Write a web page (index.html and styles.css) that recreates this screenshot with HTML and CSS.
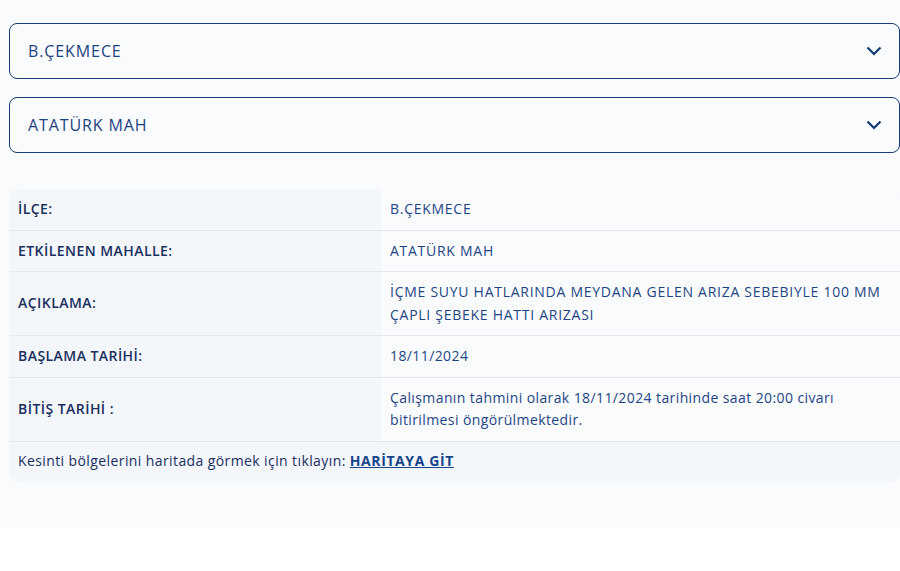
FILE: index.html
```html
<!DOCTYPE html>
<html lang="tr">
<head>
    <meta charset="UTF-8">
    <title>Arıza Kesinti Bilgisi</title>
    <link rel="stylesheet" href="styles.css">
</head>
<body>
    <div class="page">
        <div class="select-box">
            <span>B.ÇEKMECE</span>
            <svg class="chevron" width="16" height="10" viewBox="0 0 16 10"><path d="M1.5 1.5 L8 8 L14.5 1.5" fill="none" stroke="#123a72" stroke-width="2.2"/></svg>
        </div>
        <div class="select-box">
            <span>ATATÜRK MAH</span>
            <svg class="chevron" width="16" height="10" viewBox="0 0 16 10"><path d="M1.5 1.5 L8 8 L14.5 1.5" fill="none" stroke="#123a72" stroke-width="2.2"/></svg>
        </div>

        <div class="info">
            <div class="row">
                <div class="label">İLÇE:</div>
                <div class="value upper">B.ÇEKMECE</div>
            </div>
            <div class="row">
                <div class="label">ETKİLENEN MAHALLE:</div>
                <div class="value upper">ATATÜRK MAH</div>
            </div>
            <div class="row">
                <div class="label">AÇIKLAMA:</div>
                <div class="value upper">İÇME SUYU HATLARINDA MEYDANA GELEN ARIZA SEBEBIYLE 100 MM ÇAPLI ŞEBEKE HATTI ARIZASI</div>
            </div>
            <div class="row">
                <div class="label">BAŞLAMA TARİHİ:</div>
                <div class="value">18/11/2024</div>
            </div>
            <div class="row">
                <div class="label">BİTİŞ TARİHİ :</div>
                <div class="value">Çalışmanın tahmini olarak 18/11/2024 tarihinde saat 20:00 civarı bitirilmesi öngörülmektedir.</div>
            </div>
            <div class="foot">
                Kesinti bölgelerini haritada görmek için tıklayın: <a href="javascript:">HARİTAYA GİT</a>
            </div>
        </div>
    </div>
</body>
</html>
```

FILE: styles.css
```css
body { margin: 0; padding: 0; background: #fff; font-family: "Open Sans", "Noto Sans", sans-serif; color: #1b3566;}
a { color: #15448a; font-weight: 700; text-decoration: underline; letter-spacing: 0.6px;}
.page {
    width: 891px;
    padding: 23px 0 45px 9px;
    background: #f9fbfd;
    overflow: hidden;
}
.select-box {
    display: flex;
    align-items: center;
    justify-content: space-between;
    height: 54px;
    margin-bottom: 18px;
    padding: 0 17px 0 18px;
    border: 1px solid #173d78;
    border-radius: 8px;
    font-size: 16px;
    letter-spacing: 0.9px;
    color: #1d4280;
}
.chevron { display: block;}
.info {
    margin-top: 36px;
    border-radius: 10px;
    background: #f3f6fb;
    overflow: hidden;
    font-size: 14px;
    line-height: 22.5px;
    letter-spacing: 0.4px;
}
.row {
    display: flex;
    border-bottom: 1px solid #e4e8ed;
}
.label {
    width: 354px;
    padding: 9px 9px;
    display: flex;
    align-items: center;
    font-weight: 600;
    letter-spacing: 0.45px;
    color: #1a2f5e;
}
.value {
    flex: 1;
    padding: 9px 9px;
    padding-right: 15px;
    background: #f9fbfd;
    color: #1f4584;
}
.upper { letter-spacing: 0.73px;}
.foot {
    padding: 8px 9px 9.5px;
    color: #1a2f5e;
}
```
